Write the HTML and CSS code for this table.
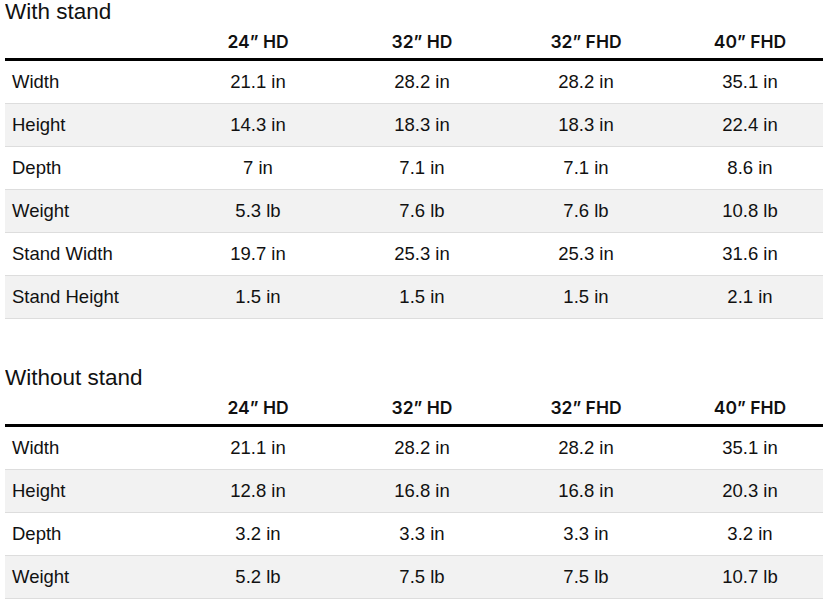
FILE: index.html
```html
<!DOCTYPE html>
<html lang="en">
<head>
<meta charset="utf-8">
<title>Dimensions</title>
<link rel="stylesheet" href="styles.css">
</head>
<body>
<section class="spec spec-first">
  <h2 class="spec-title">With stand</h2>
  <table class="spec-table">
    <colgroup><col class="c-label"><col class="c-val"><col class="c-val"><col class="c-val"><col class="c-val"></colgroup>
    <thead>
      <tr><th></th><th>24” HD</th><th>32” HD</th><th>32” FHD</th><th>40” FHD</th></tr>
    </thead>
    <tbody>
      <tr><td>Width</td><td>21.1 in</td><td>28.2 in</td><td>28.2 in</td><td>35.1 in</td></tr>
      <tr><td>Height</td><td>14.3 in</td><td>18.3 in</td><td>18.3 in</td><td>22.4 in</td></tr>
      <tr><td>Depth</td><td>7 in</td><td>7.1 in</td><td>7.1 in</td><td>8.6 in</td></tr>
      <tr><td>Weight</td><td>5.3 lb</td><td>7.6 lb</td><td>7.6 lb</td><td>10.8 lb</td></tr>
      <tr><td>Stand Width</td><td>19.7 in</td><td>25.3 in</td><td>25.3 in</td><td>31.6 in</td></tr>
      <tr><td>Stand Height</td><td>1.5 in</td><td>1.5 in</td><td>1.5 in</td><td>2.1 in</td></tr>
    </tbody>
  </table>
</section>
<section class="spec">
  <h2 class="spec-title">Without stand</h2>
  <table class="spec-table">
    <colgroup><col class="c-label"><col class="c-val"><col class="c-val"><col class="c-val"><col class="c-val"></colgroup>
    <thead>
      <tr><th></th><th>24” HD</th><th>32” HD</th><th>32” FHD</th><th>40” FHD</th></tr>
    </thead>
    <tbody>
      <tr><td>Width</td><td>21.1 in</td><td>28.2 in</td><td>28.2 in</td><td>35.1 in</td></tr>
      <tr><td>Height</td><td>12.8 in</td><td>16.8 in</td><td>16.8 in</td><td>20.3 in</td></tr>
      <tr><td>Depth</td><td>3.2 in</td><td>3.3 in</td><td>3.3 in</td><td>3.2 in</td></tr>
      <tr><td>Weight</td><td>5.2 lb</td><td>7.5 lb</td><td>7.5 lb</td><td>10.7 lb</td></tr>
    </tbody>
  </table>
</section>
</body>
</html>
```
FILE: styles.css
```css
html, body {
  overflow: hidden;
}
body {
  margin: 0 0 0 5px;
  background: #fff;
  color: #111;
  font-family: "Liberation Sans", Arial, sans-serif;
  width: 827px;
}
.spec {
  margin-top: 46px;
}
.spec-first {
  margin-top: -1px;
}
.spec-title {
  margin: 0;
  font-size: 22.5px;
  line-height: 26px;
  font-weight: 400;
  color: #111;
}
.spec-table {
  width: 827px;
  table-layout: fixed;
  border-collapse: collapse;
}
.c-label { width: 171px; }
.c-val { width: 164px; }
.spec-table th {
  height: 33px;
  padding: 0;
  font-family: Inter, "Liberation Sans", sans-serif;
  font-size: 17.5px;
  font-weight: 600;
  text-align: center;
  vertical-align: middle;
  border-bottom: 3px solid #000;
}
.spec-table td {
  height: 42px;
  padding: 0;
  font-size: 18.5px;
  text-align: center;
  vertical-align: middle;
}
.spec-table td:first-child {
  text-align: left;
  padding-left: 7px;
}
.spec-table tbody tr {
  border-bottom: 1px solid #dddddd;
}
.spec-table tbody tr:nth-child(even) {
  background: #f2f2f2;
}
```
